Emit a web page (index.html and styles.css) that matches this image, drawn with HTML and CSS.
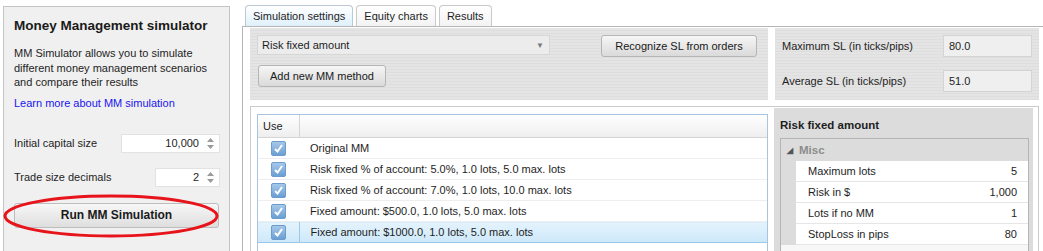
FILE: index.html
```html
<!DOCTYPE html>
<html lang="en">
<head>
  <meta charset="UTF-8" />
  <title>Money Management simulator</title>
  <link rel="stylesheet" href="styles.css">
</head>
<body>
  <div class="app">
    <!-- Left info panel -->
    <aside class="sidebar">
      <h1>Money Management simulator</h1>
      <p class="intro">MM Simulator allows you to simulate different money management scenarios and compare their results</p>
      <a class="learn-link" href="#">Learn more about MM simulation</a>

      <div class="field-row">
        <label>Initial capital size</label>
        <div class="spin-box wide">
          <span>10,000</span>
          <svg width="7" height="11" viewBox="0 0 7 11"><path d="M3.5 0 L7 4 L0 4 Z M0 7 L7 7 L3.5 11 Z" fill="#9a9a9a"/></svg>
        </div>
      </div>
      <div class="field-row">
        <label>Trade size decimals</label>
        <div class="spin-box narrow">
          <span>2</span>
          <svg width="7" height="11" viewBox="0 0 7 11"><path d="M3.5 0 L7 4 L0 4 Z M0 7 L7 7 L3.5 11 Z" fill="#9a9a9a"/></svg>
        </div>
      </div>

      <div class="run-wrap">
        <button class="run-button">Run MM Simulation</button>
        <svg class="highlight" width="220" height="46" viewBox="0 0 220 46">
          <ellipse cx="108" cy="22" rx="106" ry="20" fill="none" stroke="#e8141b" stroke-width="3"/>
        </svg>
      </div>
    </aside>

    <main class="workspace">
      <div class="tabs">
        <div class="tab active">Simulation settings</div>
        <div class="tab">Equity charts</div>
        <div class="tab">Results</div>
      </div>

      <div class="tab-body">
        <div class="toolbar">
          <div class="methods">
            <div class="methods-left">
              <div class="select-box">
                <span>Risk fixed amount</span>
                <span class="caret">&#9660;</span>
              </div>
              <button class="std-button add-button">Add new MM method</button>
            </div>
            <button class="std-button recognize-button">Recognize SL from orders</button>
          </div>
          <div class="sl-box">
            <div class="sl-row">
              <span>Maximum SL (in ticks/pips)</span>
              <div class="sl-input">80.0</div>
            </div>
            <div class="sl-row">
              <span>Average SL (in ticks/pips)</span>
              <div class="sl-input">51.0</div>
            </div>
          </div>
        </div>

        <div class="lower">
          <div class="grid-wrap">
            <table class="mm-grid">
              <thead>
                <tr><th class="use-col">Use</th><th></th></tr>
              </thead>
              <tbody>
                <tr><td class="use-col"><span class="check"></span></td><td>Original MM</td></tr>
                <tr><td class="use-col"><span class="check"></span></td><td>Risk fixed % of account: 5.0%, 1.0 lots, 5.0 max. lots</td></tr>
                <tr><td class="use-col"><span class="check"></span></td><td>Risk fixed % of account: 7.0%, 1.0 lots, 10.0 max. lots</td></tr>
                <tr><td class="use-col"><span class="check"></span></td><td>Fixed amount: $500.0, 1.0 lots, 5.0 max. lots</td></tr>
                <tr class="selected"><td class="use-col"><span class="check"></span></td><td>Fixed amount: $1000.0, 1.0 lots, 5.0 max. lots</td></tr>
              </tbody>
            </table>
          </div>

          <div class="props">
            <div class="props-title">Risk fixed amount</div>
            <div class="prop-grid">
              <div class="prop-category"><span class="tri">&#9698;</span>Misc</div>
              <div class="prop-row"><span>Maximum lots</span><span>5</span></div>
              <div class="prop-row"><span>Risk in $</span><span>1,000</span></div>
              <div class="prop-row"><span>Lots if no MM</span><span>1</span></div>
              <div class="prop-row"><span>StopLoss in pips</span><span>80</span></div>
              <div class="prop-rest"></div>
            </div>
          </div>
        </div>
      </div>
    </main>
  </div>
</body>
</html>
```

FILE: styles.css
```css
body {
  margin: 0;
  font-family: 'Liberation Sans', Arial, sans-serif;
  font-size: 11px;
  color: #1e1e1e;
  background-color: white;
  overflow: hidden;
}

.app {
  display: flex;
  align-items: flex-start;
  height: 251px;
  overflow: hidden;
}

/* Left panel */
.sidebar {
  margin: 6px 0 0 3px;
  width: 227px;
  height: 260px;
  padding: 11px 0 0 10px;
  box-sizing: border-box;
  border: 1px solid #c4c4c4;
  background-color: #f0f0f0;
  position: relative;
}

.sidebar h1 {
  font-size: 13.5px;
  margin: 0;
  line-height: 16px;
  font-weight: bold;
  color: #1a1a1a;
}

.intro {
  margin: 12px 0 0 0;
  line-height: 14.5px;
  width: 200px;
}

.learn-link {
  display: block;
  margin-top: 7px;
  color: #1a14f0;
  text-decoration: none;
}

.field-row {
  display: flex;
  justify-content: space-between;
  align-items: center;
  width: 206px;
  height: 19px;
}

.field-row:first-of-type {
  margin-top: 25px;
}

.field-row + .field-row {
  margin-top: 15px;
}

.spin-box {
  height: 19px;
  box-sizing: border-box;
  background-color: white;
  border: 1px solid #e2e2e2;
  display: flex;
  align-items: center;
  justify-content: flex-end;
  gap: 8px;
  padding-right: 5px;
}

.spin-box.wide {
  width: 99px;
}

.spin-box.narrow {
  width: 65px;
}

.run-wrap {
  position: relative;
  margin-top: 16px;
  width: 205px;
}

.run-button {
  width: 205px;
  height: 25px;
  font-family: inherit;
  font-size: 12px;
  font-weight: bold;
  color: #1a1a1a;
  background: linear-gradient(#f7f7f7, #dedede);
  border: 1px solid #bdbdbd;
  border-radius: 3px;
}

.highlight {
  position: absolute;
  left: -11px;
  top: -9px;
}

/* Right workspace */
.workspace {
  margin-left: 12px;
  flex: 1;
  padding-top: 5px;
}

.tabs {
  display: flex;
  gap: 3px;
  margin-left: 3px;
}

.tab {
  height: 20px;
  line-height: 21px;
  padding: 0 7px;
  border: 1px solid #c9c9c9;
  border-bottom: none;
  border-radius: 4px 4px 0 0;
  background: linear-gradient(#ffffff, #f3f3f3);
}

.tab.active {
  background: linear-gradient(#ffffff, #dff0fb);
  border-color: #bcc8d4;
}

.tab-body {
  border-top: 1px solid #b5b5b5;
  border-left: 1px solid #b5b5b5;
  padding: 1px 0 0 7px;
  height: 240px;
}

.toolbar {
  display: flex;
  gap: 7px;
}

.methods {
  width: 518px;
  height: 72px;
  box-sizing: border-box;
  padding: 7px 11px 0 7px;
  display: flex;
  justify-content: space-between;
  align-items: flex-start;
  background: repeating-linear-gradient(#e4e4e4 0 2px, #dedede 2px 3px);
}

.methods-left {
  display: flex;
  flex-direction: column;
  gap: 10px;
}

.select-box {
  width: 293px;
  height: 20px;
  box-sizing: border-box;
  border: 1px solid #d6d6d6;
  background-color: #ececec;
  display: flex;
  align-items: center;
  justify-content: space-between;
  padding: 0 5px 0 4px;
}

.caret {
  font-size: 8px;
  color: #7a7a7a;
}

.std-button {
  height: 22px;
  font-family: inherit;
  font-size: 11px;
  color: #1a1a1a;
  background: linear-gradient(#f6f6f6, #dadada);
  border: 1px solid #b5b5b5;
  border-radius: 3px;
  padding: 0;
  white-space: nowrap;
}

.add-button {
  width: 128px;
  margin-left: 1px;
}

.recognize-button {
  width: 156px;
}

.sl-box {
  width: 264px;
  height: 72px;
  box-sizing: border-box;
  padding: 7px 7px 0 7px;
  display: flex;
  flex-direction: column;
  gap: 13px;
  background: repeating-linear-gradient(#e4e4e4 0 2px, #dedede 2px 3px);
}

.sl-row {
  display: flex;
  justify-content: space-between;
  align-items: center;
}

.sl-input {
  width: 89px;
  height: 22px;
  box-sizing: border-box;
  line-height: 20px;
  padding-left: 5px;
  background-color: #efefef;
  border: 1px solid #d4d4d4;
}

/* Lower area */
.lower {
  margin-top: 6px;
  width: 789px;
  height: 150px;
  box-sizing: border-box;
  border: 1px solid #cbcbcb;
  border-bottom: none;
  display: flex;
  align-items: flex-start;
}

.grid-wrap {
  margin: 7px 0 0 6px;
  width: 511px;
  flex-shrink: 0;
  height: 140px;
  box-sizing: border-box;
  border: 1px solid #a9c4df;
  border-bottom: none;
}

.mm-grid {
  width: 100%;
  table-layout: fixed;
  border-collapse: collapse;
}

.mm-grid th {
  height: 22px;
  padding: 0;
  font-weight: normal;
  text-align: left;
  background: linear-gradient(#ffffff, #eeeeee);
  border-bottom: 1px solid #d5d5d5;
}

.mm-grid th.use-col {
  padding-left: 5px;
  border-right: 1px solid #d5d5d5;
}

.mm-grid td {
  height: 20px;
  padding: 0 0 0 11px;
  border-bottom: 1px solid #eeeeee;
  white-space: nowrap;
}

.mm-grid .use-col {
  width: 41px;
  box-sizing: border-box;
}

.mm-grid td.use-col {
  padding-left: 13px;
}

.mm-grid tr.selected td {
  background: linear-gradient(#e4f3fd, #cde8f9);
  border-top: 1px solid #9dc8e8;
  border-bottom: 1px solid #9dc8e8;
}

.mm-grid tr.selected td.use-col {
  border-right: 1px solid #9dc8e8;
}

.check {
  display: block;
  width: 15px;
  height: 15px;
  box-sizing: border-box;
  border-radius: 2px;
  border: 1px solid #6d9ccc;
  background:
    url("data:image/svg+xml,%3Csvg xmlns='http://www.w3.org/2000/svg' width='13' height='13'%3E%3Cpath d='M3 7 L5.5 9.5 L10 3' fill='none' stroke='white' stroke-width='2'/%3E%3C/svg%3E") center no-repeat,
    linear-gradient(#a6c8ea, #6a9fd4);
}

/* Property panel */
.props {
  margin: 1px 0 0 6px;
  width: 259px;
  flex-shrink: 0;
  height: 150px;
  background-color: #dcdcdc;
  padding: 10px 6px 0 6px;
  box-sizing: border-box;
}

.props-title {
  font-weight: bold;
  font-size: 11.5px;
  line-height: 14px;
}

.prop-grid {
  margin-top: 6px;
  width: 247px;
  border: 1px solid #b4b4b4;
  border-bottom: none;
  background-color: #dcdcdc;
}

.prop-category {
  height: 22px;
  line-height: 22px;
  font-weight: bold;
  font-size: 11.5px;
  color: #8c8c8c;
  padding-left: 6px;
}

.tri {
  font-size: 8px;
  color: #555;
  margin-right: 6px;
  vertical-align: 1px;
}

.prop-row {
  margin-left: 15px;
  height: 20px;
  line-height: 20px;
  background-color: white;
  border-bottom: 1px solid #e6e6e6;
  display: flex;
  justify-content: space-between;
  padding: 0 11px 0 12px;
}

.prop-rest {
  height: 20px;
  background-color: #f7f7f7;
}
```
